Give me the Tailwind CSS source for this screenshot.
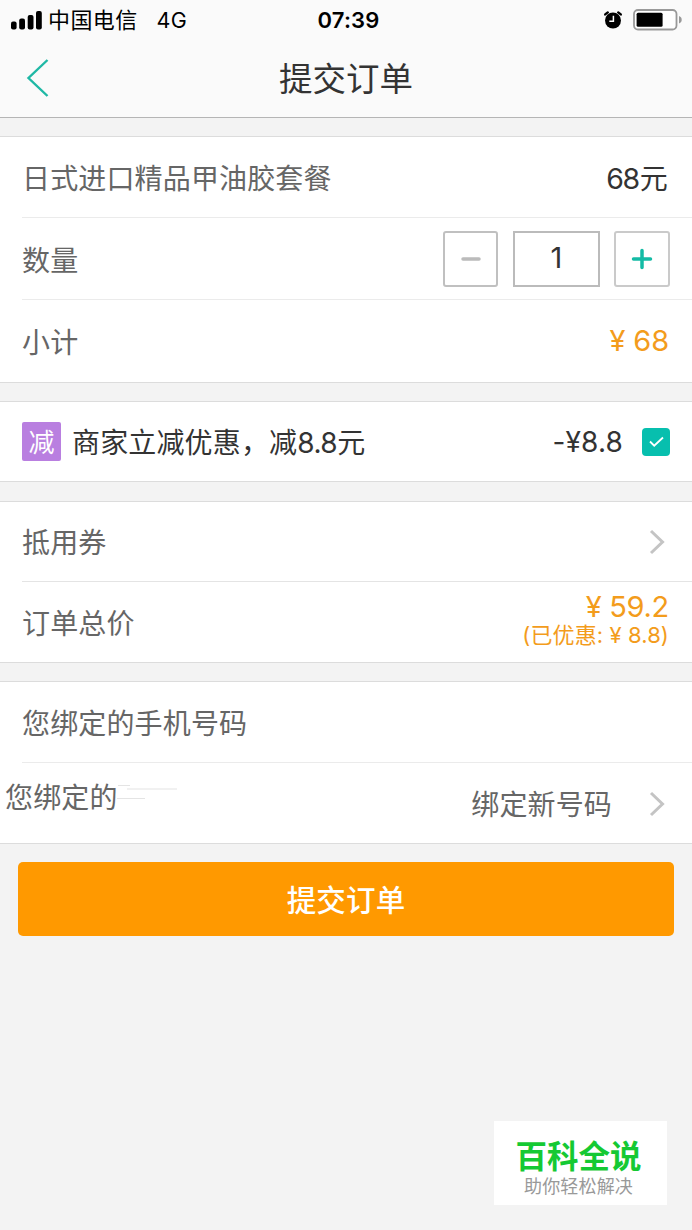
<!DOCTYPE html>
<html lang="zh-CN">
<head>
<meta charset="utf-8">
<title>提交订单</title>
<script src="https://cdn.jsdelivr.net/npm/@tailwindcss/browser@4"></script>
</head>
<body class="bg-[#f3f3f3]">
<div class="relative h-[1230px] w-[692px] overflow-hidden bg-[#f3f3f3] font-['Inter','Noto_Sans_CJK_SC',sans-serif] text-[28px] leading-10 font-normal tracking-[0.15px] whitespace-nowrap text-[#666]">
  <header class="h-[118px] border-b border-[#b5b5b5] bg-[#fafafa]">
    <div class="grid h-[38px] grid-cols-[1fr_auto_1fr] items-center pr-[10px] pl-[11px] text-black">
      <div class="flex items-center font-normal">
        <svg class="mb-[2px] h-[19px] w-[31px]" viewBox="0 0 31 19"><rect x="0" y="10.5" width="5.6" height="8" rx="2"/><rect x="8.2" y="7.5" width="5.8" height="11" rx="2"/><rect x="16.7" y="4" width="5.8" height="14.5" rx="2"/><rect x="25" y="0" width="5.8" height="18.5" rx="2"/></svg>
        <span class="mb-[3px] ml-[6px] text-[22px] tracking-[0.4px]">中国电信</span>
        <span class="mb-[3px] ml-[19px] text-[21.5px]">4G</span>
      </div>
      <div class="mb-[3px] pl-[4px] text-[22px] font-semibold">07:39</div>
      <div class="mb-[3px] flex items-center justify-end">
        <svg class="mr-[10px] h-[20px] w-[20px]" viewBox="0 0 20 20"><circle cx="10" cy="10.5" r="8"/><path d="M2.2 4.400 4.800 2.400M17.800 4.400 15.200 2.400" stroke="#000" stroke-width="2.4" stroke-linecap="round"/><path d="M10.4 5.8v5.4H6.3" fill="none" stroke="#fff" stroke-width="1.5"/></svg>
        <svg class="h-[22px] w-[49px]" viewBox="0 0 49 22"><rect x="1" y="1" width="42.5" height="19.5" rx="4" fill="#fff" stroke="#999" stroke-width="1.8"/><rect x="3.6" y="3.8" width="26" height="14" rx="1.5"/><path d="M46 7c2 .8 2.7 2 2.7 3.8S48 13.800 46 14.600z" fill="#999"/></svg>
      </div>
    </div>
    <div class="flex h-[79px] items-center">
      <svg class="ml-[26px] h-[38px] w-[24px]" viewBox="0 0 24 38" fill="none" stroke="#1fb8a5" stroke-width="2.4"><path d="M21.500 1 2.500 19l19 18"/></svg>
      <h1 class="ml-[229px] pt-[2px] text-[33.500px] tracking-normal text-[#333]">提交订单</h1>
    </div>
  </header>

  <section class="mt-[18px] flex h-[247px] flex-col border-y border-[#dcdcdc] bg-white pl-[22px]">
    <div class="flex h-[81px] items-center justify-between border-b border-[#ebebeb] pt-[4px] pr-[24px]">
      <span>日式进口精品甲油胶套餐</span><span class="text-[#333]"><span class="text-[28.500px] tracking-[-1.3px]">68</span><span class="ml-px">元</span></span>
    </div>
    <div class="flex h-[82px] items-center border-b border-[#ebebeb] pr-[22px]">
      <span class="flex-1 pt-[4px]">数量</span>
      <div class="flex h-[56px] w-[55px] items-center justify-center rounded-[3px] border-2 border-[#c0c0c0]"><svg class="h-[22px] w-[22px]" viewBox="0 0 22 22" stroke="#bbb" stroke-width="3.500" stroke-linecap="round"><path d="M3 11h16"/></svg></div>
      <div class="mr-[14px] ml-[15px] flex h-[56px] w-[87px] items-center justify-center border-2 border-[#bbb] pb-[2px] text-[29px] text-[#333]">1</div>
      <div class="flex h-[56px] w-[56px] items-center justify-center rounded-[3px] border-2 border-[#cacaca]"><svg class="h-[22px] w-[22px]" viewBox="0 0 22 22" stroke="#14bba5" stroke-width="3.500" stroke-linecap="round"><path d="M2.500 11h17M11 2.500v17"/></svg></div>
    </div>
    <div class="flex h-[82px] items-center justify-between pr-[23px]">
      <span class="pt-[4px]">小计</span><span class="text-[29px] tracking-[-0.1px] text-[#f39c1c]">¥ 68</span>
    </div>
  </section>

  <section class="mt-[18px] flex h-[81px] items-center border-y border-[#dcdcdc] bg-white pr-[22px] pl-[22px] text-[#333]">
    <span class="flex h-[39px] w-[39px] items-center justify-center rounded-[2px] bg-[#b97fe0] pt-[2px] text-[26px] text-white">减</span>
    <span class="ml-[11px] flex-1 pt-[3px]">商家立减优惠，减<span class="tracking-[-0.5px]">8.8</span>元</span>
    <span class="pt-px text-[28px]">-¥8.8</span>
    <svg class="ml-[19px] h-[28px] w-[28px]" viewBox="0 0 28 28"><rect width="28" height="28" rx="4" fill="#07bfae"/><path d="m8 13.500 4.200 4.200 8.800-8.200" fill="none" stroke="#fff" stroke-width="1.800"/></svg>
  </section>

  <section class="mt-[19px] h-[162px] border-y border-[#dcdcdc] bg-white pl-[22px]">
    <div class="flex h-[80px] items-center justify-between border-b border-[#e4e4e4] pr-[26px]">
      <span class="pt-[3px]">抵用券</span>
      <svg class="h-[26px] w-[18px]" viewBox="0 0 18 26" fill="none" stroke="#c4c4c4" stroke-width="3"><path d="M3 2 14.500 13 3 24"/></svg>
    </div>
    <div class="flex h-[80px] items-center justify-between pr-[23px]">
      <span class="pt-[4px]">订单总价</span>
      <span class="flex flex-col items-end pb-[4px] text-[#f39c1c]"><span class="text-[29px] leading-[30px] tracking-[-0.3px]">¥ 59.2</span><span class="text-[22px] leading-[26px] tracking-[0.100px]">(已优惠: ¥ 8.8)</span></span>
    </div>
  </section>

  <section class="mt-[18px] h-[163px] border-y border-[#dcdcdc] bg-white pl-[22px]">
    <div class="flex h-[81px] items-center border-b border-[#ebebeb] pt-[4px]">您绑定的手机号码</div>
    <div class="-ml-[17px] flex h-[80px] items-center pr-[26px]">
      <span class="pb-[11px]">您绑定的</span>
      <svg class="mb-[22px] -ml-px h-[20px] w-[62px]" viewBox="0 0 62 20" stroke="#e4e4e4" stroke-width="1.200"><path d="M1 3.500h12M10 7h50M0 16.500h28"/></svg>
      <span class="ml-auto pt-[4px]">绑定新号码</span>
      <svg class="mt-[2px] ml-[36px] h-[26px] w-[18px]" viewBox="0 0 18 26" fill="none" stroke="#c4c4c4" stroke-width="3"><path d="M3 2 14.500 13 3 24"/></svg>
    </div>
  </section>

  <button class="mt-[18px] ml-[18px] flex h-[74px] w-[656px] items-center justify-center rounded-[5px] bg-[#ff9900] pt-px text-[29.500px] font-medium text-white">提交订单</button>

  <aside class="absolute top-[1121px] left-[494px] flex h-[84px] w-[173px] flex-col items-center bg-white pt-[18px] pr-[4px]">
    <strong class="text-[31.500px] leading-9 font-bold tracking-normal text-[#15c933]">百科全说</strong>
    <span class="text-[18px] leading-6 text-[#999]">助你轻松解决</span>
  </aside>
</div>
</body>
</html>
